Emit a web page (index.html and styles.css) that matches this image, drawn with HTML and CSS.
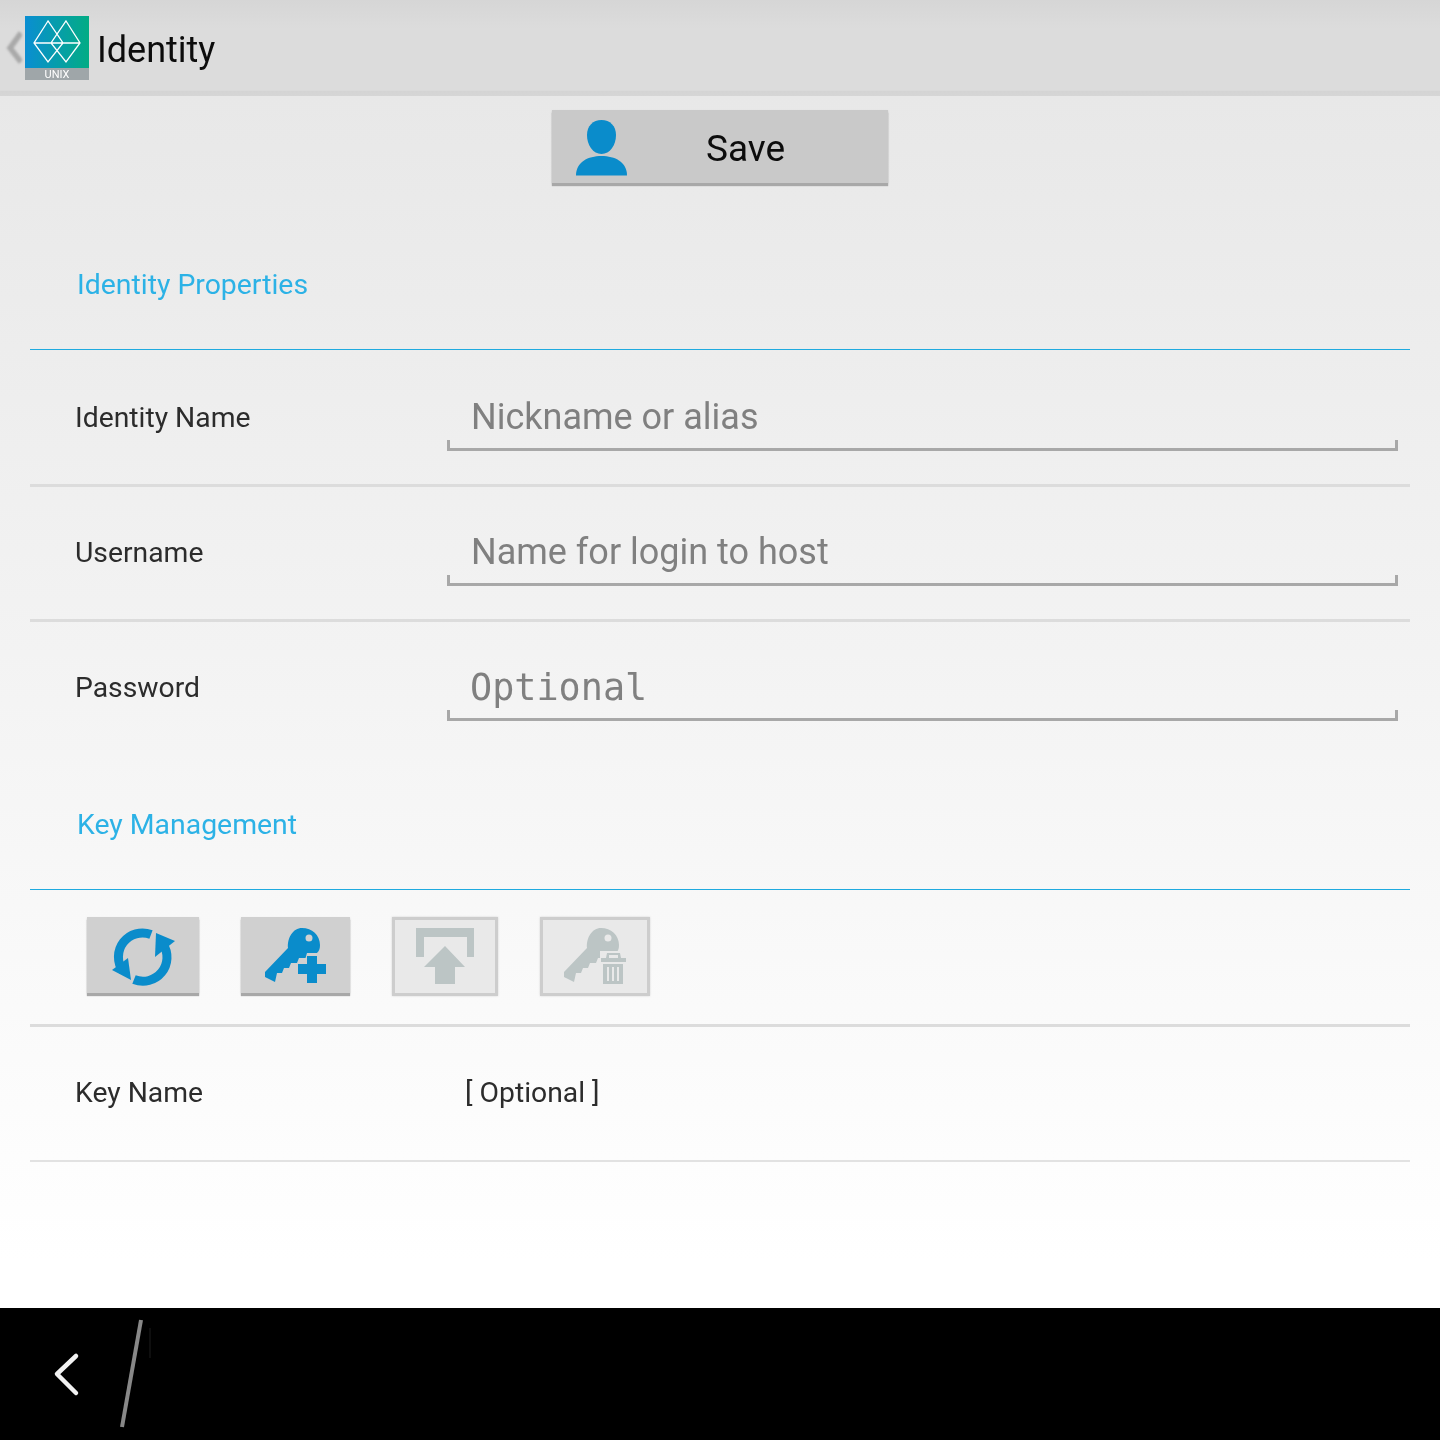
FILE: index.html
```html
<!DOCTYPE html>
<html lang="en">
<head>
<meta charset="utf-8">
<title>Identity</title>
<link rel="stylesheet" href="styles.css">
</head>
<body>
<div class="screen">
  <header class="appbar">
    <svg class="up" width="16" height="34" viewBox="0 0 16 34"><path class="up-path" d="M15 2 4 17l11 14"/></svg>
    <svg class="logo" width="64" height="64" viewBox="0 0 64 64">
      <defs><linearGradient id="lg" x1="0" y1="0" x2="1" y2="0"><stop offset="0" stop-color="#0a8ed2"/><stop offset="1" stop-color="#03ac84"/></linearGradient></defs>
      <rect width="64" height="52" fill="url(#lg)"/>
      <rect y="52" width="64" height="12" fill="#9fa6a9"/>
      <path class="logo-line" d="M23 5 9 27l14 19 15-19zM41 5 55 27 41 46 26 27zM9 27h46"/>
      <text class="logo-text" x="32" y="61.500" text-anchor="middle">UNIX</text>
    </svg>
    <h1 class="title">Identity</h1>
  </header>

  <main class="content">
    <div class="save-row">
      <button class="btn save">
        <svg class="save-icon" width="52" height="56" viewBox="0 0 52 56"><path class="blue" d="M25.500 0C34 0 40 6 40 15c0 10-6 19-14.500 19S11 25 11 15C11 6 17 0 25.500 0z"/><path class="blue" d="M0 55.500C0 42 12 36 25.500 36S51 42 51 55.500z"/></svg>
        <span class="save-label">Save</span>
      </button>
    </div>

    <h2 class="section first">Identity Properties</h2>
    <div class="row">
      <span class="label">Identity Name</span>
      <div class="field"><span class="hint">Nickname or alias</span><div class="line"></div></div>
    </div>
    <div class="row">
      <span class="label">Username</span>
      <div class="field"><span class="hint">Name for login to host</span><div class="line"></div></div>
    </div>
    <div class="row plain">
      <span class="label">Password</span>
      <div class="field"><span class="hint mono">Optional</span><div class="line"></div></div>
    </div>

    <h2 class="section second">Key Management</h2>
    <div class="row tools">
      <button class="btn tool w112">
        <svg class="tool-icon" width="70" height="66" viewBox="0 0 70 66"><g transform="translate(-108 -924)">
          <path class="ring" d="M151 934.500A24 24 0 0 0 123 971"/><path class="blue" d="M112 970l19 10-3-22z"/>
          <path class="ring" d="M134 979.500A24 24 0 0 0 163 944"/><path class="blue" d="M156 933l19 8-20 16z"/>
        </g></svg>
      </button>
      <button class="btn tool w109">
        <svg class="tool-icon" width="70" height="66" viewBox="0 0 70 66"><g transform="translate(-261 -924)" class="blue">
          <path fill-rule="evenodd" d="M302 928c10 0 18 7 18 17 0 4-1 6-3 8h-10l-1.500 5H299l-2 5h-6l-2 5h-5l-2 5h-5l-2 9-10-5v-5l23-24c-1-10 5-20 14-20zm7 6.500a3.500 3.500 0 1 0 0 7 3.500 3.500 0 0 0 0-7z"/>
          <path d="M298 964h9v-8h10v8h9v10h-9v9h-10v-9h-9z"/>
        </g></svg>
      </button>
      <button class="btn tool off w106">
        <svg width="70" height="66" viewBox="0 0 70 66"><g transform="translate(-410 -924)" class="grey">
          <path d="M416 928h58v29h-7v-20h-43v20h-8z"/>
          <path d="M445 946l20 21h-10v17h-20v-17h-11z"/>
        </g></svg>
      </button>
      <button class="btn tool off w110">
        <svg width="70" height="66" viewBox="0 0 70 66"><g transform="translate(-560 -924)" class="grey">
          <path fill-rule="evenodd" d="M601 928c10 0 18 7 18 17 0 4-1 6-3 8h-10l-1.500 5H598l-2 5h-6l-2 5h-5l-2 5h-5l-2 9-10-5v-5l23-24c-1-10 5-20 14-20zm7 6.500a3.500 3.500 0 1 0 0 7 3.500 3.500 0 0 0 0-7z"/>
          <path class="trash-cut" d="M600 951h28v35h-28z"/>
          <path fill-rule="evenodd" d="M607 953h13l1 5h5v4h-25v-4h5zM609 955v3h9v-3zM603 964h20v20h-20zM607 967v14h2v-14zM612 967v14h2v-14zM617 967v14h2v-14z"/>
        </g></svg>
      </button>
    </div>
    <div class="row last">
      <span class="label">Key Name</span>
      <span class="value">[ Optional ]</span>
    </div>
  </main>

  <footer class="navbar">
    <svg class="nav-art" width="160" height="132" viewBox="0 0 160 132">
      <path class="nav-back" d="M76 48 57 66l19 19"/>
      <path class="nav-slash" d="M141 12 122 119"/>
      <path class="nav-faint" d="M150 20v30"/>
    </svg>
  </footer>
</div>
</body>
</html>
```
FILE: styles.css
```css
* { box-sizing: border-box; }
html, body { margin: 0; padding: 0; }
body { background: #000; font-family: Roboto, "Noto Sans", sans-serif; }

.screen { width: 1440px; height: 1440px; display: flex; flex-direction: column; overflow: hidden; filter: blur(.5px); }

.appbar {
  height: 96px; flex: none; display: flex; align-items: center; padding: 0 0 0 6px;
  background: linear-gradient(#d6d6d6, #dcdcdc 30%, #dcdcdc 94%, #d4d4d4 95%, #d6d6d6);
}
.up { flex: none; filter: blur(1px); }
.up-path { fill: none; stroke: #a9a9a9; stroke-width: 5.500; }
.logo { flex: none; margin-left: 3px; }
.logo-line { fill: none; stroke: #fff; stroke-width: 1.300; }
.logo-text { font: 11px Roboto, sans-serif; fill: #fff; }
.title { margin: 0 0 0 8px; font-size: 36px; font-weight: 400; color: #0c0c0c; position: relative; top: 2px; }

.content {
  flex: 1; padding: 14px 30px 0;
  background: linear-gradient(#e8e8e8 0, #ffffff 96%);
}

.save-row { display: flex; justify-content: center; }
.btn { border: 0; padding: 0; margin: 0; font-family: inherit; display: flex; align-items: center; justify-content: center; background: #c9c9c9; box-shadow: 0 3px 1px #a8a8a8, 0 1px 2px rgba(0,0,0,.15); }
.save { width: 336px; height: 73px; position: relative; display: block; text-align: left; }
.save-icon { position: absolute; left: 24px; top: 10px; }
.save-label { position: absolute; left: 154px; top: 15px; font-size: 37px; color: #0c0c0c; line-height: 48px; }
.tool-icon { margin-top: 4px; }
.blue { fill: #0a8ccb; }
.grey { fill: #bcc5c5; }
.ring { fill: none; stroke: #0a8ccb; stroke-width: 9; }
.trash-cut { fill: #e9e9e9; }

.section { margin: 0; padding-left: 47px; font-size: 28.400px; font-weight: 400; color: #2cb2e6; border-bottom: 1px solid #1faadf; line-height: 40px; }
.section.first { padding-top: 78px; height: 163px; margin: 4px 0 2px; }
.section.second { padding-top: 48px; height: 133px; }

.row { height: 135px; display: flex; align-items: center; border-bottom: 3px solid #dcdcdc; padding-bottom: 2px; }
.row.plain { border-bottom: 0; padding-bottom: 5px; }
.row.last { border-bottom-width: 2px; border-bottom-color: #e2e2e2; padding-bottom: 3px; }
.label { width: 417px; padding-left: 45px; font-size: 28.300px; color: #2c2c2c; flex: none; }
.value { font-size: 28.300px; color: #2c2c2c; margin-left: 18px; }

.field { width: 951px; flex: none; display: flex; flex-direction: column; margin-top: 13px; }
.hint { padding-left: 24px; font-size: 36px; line-height: 42px; margin-bottom: 2px; color: #808080; }
.hint.mono { font-family: "DejaVu Sans Mono", "Liberation Mono", monospace; font-size: 36.800px; padding-left: 23px; line-height: 44px; margin-bottom: 0; }
.line { height: 11px; border: solid #a8a8a8; border-width: 0 3px 3px; }

.tools { padding: 27px 0 0 57px; gap: 42px; align-items: flex-start; height: 137px; }
.tool { height: 76px; background: #d0d0d0; }
.w112 { width: 112px; }
.w109 { width: 109px; }
.w106 { width: 106px; }
.w110 { width: 110px; }
.tool.off { height: 79px; background: #e9e9e9; border: 3px solid #cdcdcd; box-shadow: 0 0 2px rgba(0,0,0,.15); }

.navbar { height: 132px; flex: none; background: #000; }
.nav-art { display: block; }
.nav-back { fill: none; stroke: #f2f2f2; stroke-width: 4.500; stroke-linecap: round; stroke-linejoin: round; }
.nav-slash { fill: none; stroke: #888; stroke-width: 4; }
.nav-faint { fill: none; stroke: #1c1c1c; stroke-width: 1; }
```
